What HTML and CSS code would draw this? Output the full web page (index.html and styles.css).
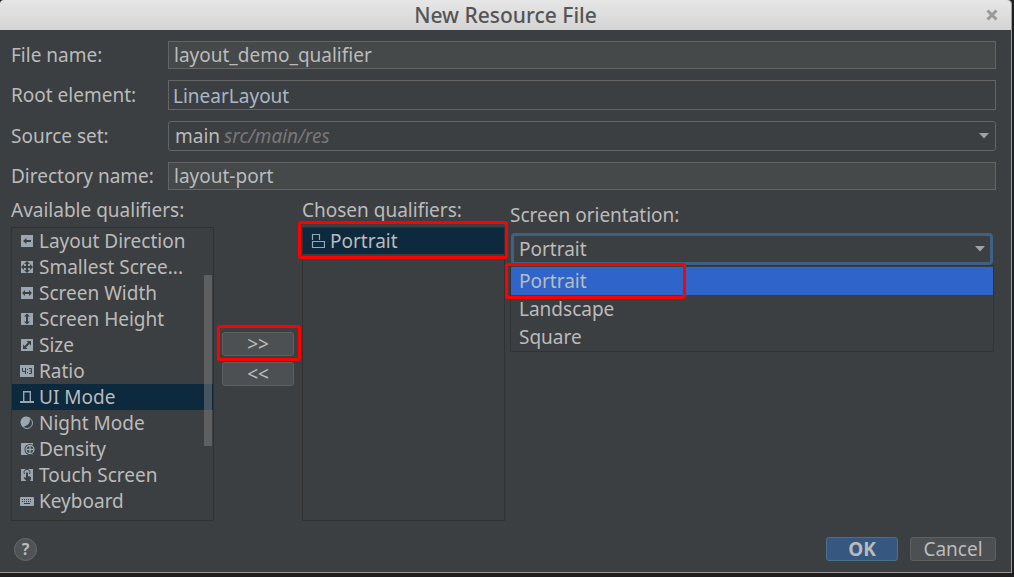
FILE: index.html
```html
<!DOCTYPE html>
<html lang="en">
<head>
<meta charset="utf-8">
<title>New Resource File</title>
<link rel="stylesheet" href="styles.css">
</head>
<body>
<main class="dialog">
  <header class="titlebar">
    <h1 class="title">New Resource File</h1>
    <button class="close" type="button" aria-label="Close">
      <svg width="12" height="12" viewBox="0 0 12 12"><path d="M1.500 1.500l9 9M10.500 1.500l-9 9" stroke="#999" stroke-width="3"/></svg>
    </button>
  </header>
  <form class="content">
    <div class="fields">
      <label for="file">File name:</label>
      <input class="field" id="file" type="text" value="layout_demo_qualifier">
      <label for="root">Root element:</label>
      <input class="field field-editor" id="root" type="text" value="LinearLayout">
      <label for="source">Source set:</label>
      <div class="combo">
        <select class="combo-select" id="source"><option>main</option></select>
        <span class="combo-hint">src/main/res</span>
        <svg class="arrow" width="10" height="6" viewBox="0 0 10 6"><path d="M0 0h10L5 5.500z" fill="#a0a3a5"/></svg>
      </div>
      <label for="directory">Directory name:</label>
      <input class="field" id="directory" type="text" value="layout-port">
    </div>

    <div class="qualifiers">
      <section class="column">
        <h2 class="heading" id="available">Available qualifiers:</h2>
        <div class="list">
          <ul class="items" role="listbox" aria-labelledby="available">
            <li class="item" role="option"><svg class="icon" viewBox="0 0 14 14"><path d="M1 1h12v12H1z" fill="#9aa7b0"/><path d="M11 7H5" stroke="#3c3f41" stroke-width="2"/><path d="M3 7l3.500-3v6z" fill="#3c3f41"/></svg>Layout Direction</li>
            <li class="item" role="option"><svg class="icon" viewBox="0 0 14 14"><path d="M1 1h12v12H1z" fill="#9aa7b0"/><path d="M7 2v10M2 7h10" stroke="#3c3f41" stroke-width="2"/><path d="M7 1l3 3H4zM7 13l3-3H4zM1 7l3-3v6zM13 7l-3-3v6z" fill="#3c3f41"/></svg>Smallest Scree...</li>
            <li class="item" role="option"><svg class="icon" viewBox="0 0 14 14"><path d="M1 1h12v12H1z" fill="#9aa7b0"/><path d="M4 7h6" stroke="#3c3f41" stroke-width="2"/><path d="M2 7l3-3v6zM12 7L9 4v6z" fill="#3c3f41"/></svg>Screen Width</li>
            <li class="item" role="option"><svg class="icon" viewBox="0 0 14 14"><path d="M1 1h12v12H1z" fill="#9aa7b0"/><path d="M7 4v6" stroke="#3c3f41" stroke-width="2"/><path d="M7 1.500l3 3H4zM7 12.500l3-3H4z" fill="#3c3f41"/></svg>Screen Height</li>
            <li class="item" role="option"><svg class="icon" viewBox="0 0 14 14"><path d="M1 1h12v12H1z" fill="#9aa7b0"/><path d="M4.500 9.500l5-5" stroke="#3c3f41" stroke-width="2"/><path d="M11 3v4.500L6.500 3zM3 11V6.500L7.500 11z" fill="#3c3f41"/></svg>Size</li>
            <li class="item" role="option"><svg class="icon" viewBox="0 0 14 14"><path d="M0 1h14v12H0z" fill="#9aa7b0"/><path d="M2.500 4v3.500h3M5.500 4v6M9 4.500h2.500v5H9M9.500 7h2" fill="none" stroke="#3c3f41"/><path d="M7 5h1v1H7zM7 8h1v1H7z" fill="#3c3f41"/></svg>Ratio</li>
            <li class="item selected" role="option" aria-selected="true"><svg class="icon" viewBox="0 0 14 14"><path d="M3.700 11V1.700h6.600V11" fill="none" stroke="#9aa7b0" stroke-width="1.400"/><path d="M0 11h14v2H0z" fill="#9aa7b0"/></svg>UI Mode</li>
            <li class="item" role="option"><svg class="icon" viewBox="0 0 14 14"><circle cx="7" cy="7" r="5.500" fill="none" stroke="#9aa7b0"/><path d="M9.500 1.500C11 5 9 10 3 11A5.500 5.500 0 1 1 9.500 1.500z" fill="#9aa7b0"/></svg>Night Mode</li>
            <li class="item" role="option"><svg class="icon icon-wide" viewBox="0 0 16 14"><path d="M1 1h12v12H1z" fill="#9aa7b0"/><circle cx="10" cy="7.500" r="5.500" fill="#3c3f41"/><circle cx="10" cy="7.500" r="4" fill="none" stroke="#9aa7b0" stroke-width="1.300"/><path d="M10 4v7M6.500 7.500h7" stroke="#9aa7b0" stroke-width="1.300"/></svg>Density</li>
            <li class="item" role="option"><svg class="icon" viewBox="0 0 14 14"><path d="M1 1h12v12H1z" fill="#9aa7b0"/><path d="M4.500 6a3 3 0 1 1 5 0" fill="none" stroke="#3c3f41"/><path d="M6 5q1-1.500 2 0v3l3 1v2l-1 2H6.500L3.500 10l1-1 1.500 1z" fill="#3c3f41"/></svg>Touch Screen</li>
            <li class="item" role="option"><svg class="icon" viewBox="0 0 14 14"><rect y="3" width="14" height="9" rx="1" fill="#9aa7b0"/><path d="M2 5.500h10M2 7.500h10" stroke="#3c3f41" stroke-dasharray="1 1"/><path d="M4 9.500h6" stroke="#3c3f41"/></svg>Keyboard</li>
          </ul>
          <div class="scroll-thumb"></div>
        </div>
      </section>

      <div class="transfer">
        <span class="marked mark-button"><button class="button" type="button" aria-label="Add qualifier">&gt;&gt;</button></span>
        <button class="button" type="button" aria-label="Remove qualifier">&lt;&lt;</button>
      </div>

      <section class="column">
        <h2 class="heading" id="chosen">Chosen qualifiers:</h2>
        <div class="list list-open">
          <ul class="items" role="listbox" aria-labelledby="chosen">
            <li class="item selected marked mark-item" role="option" aria-selected="true"><svg class="icon" viewBox="0 0 14 14"><path d="M1.500 6V.500h7V6M1.500 7.500h12v6h-12z" fill="none" stroke="#9aa7b0" stroke-width="1.200"/></svg>Portrait</li>
          </ul>
        </div>
      </section>

      <section class="editor">
        <label class="editor-label" for="orientation">Screen orientation:</label>
        <div class="combo combo-focus">
          <select class="combo-select" id="orientation"><option>Portrait</option><option>Landscape</option><option>Square</option></select>
          <svg class="arrow" width="10" height="6" viewBox="0 0 10 6"><path d="M0 0h10L5 5.500z" fill="#a0a3a5"/></svg>
          <ul class="popup" role="listbox" aria-label="Screen orientation">
            <li class="choice current" role="option" aria-selected="true"><span class="marked mark-choice">Portrait</span></li>
            <li class="choice" role="option">Landscape</li>
            <li class="choice" role="option">Square</li>
          </ul>
        </div>
      </section>
    </div>

    <footer class="actions">
      <button class="help" type="button" aria-label="Help">?</button>
      <button class="button primary" type="submit">OK</button>
      <button class="button cancel" type="button">Cancel</button>
    </footer>
  </form>
</main>
</body>
</html>
```
FILE: styles.css
```css
* { box-sizing: border-box; }
body {
  margin: 0;
  min-height: 100vh;
  padding: 0 2px 4px 0;
  display: flex;
  background: #1f1d1d;
  color: #bbbbbb;
  font: 19px/26px "Noto Sans", sans-serif;
}
h1, h2, ul { margin: 0; padding: 0; font: inherit; list-style: none; }
button, input, select { font: inherit; color: inherit; margin: 0; }
.dialog {
  flex: 1;
  display: flex;
  flex-direction: column;
  background: #3c3f41;
  border: solid #9a9a9a;
  border-width: 0 1px 1px 0;
  border-radius: 4px 4px 0 0;
}
.titlebar {
  display: grid;
  grid-template-columns: 1fr auto 1fr;
  align-items: center;
  height: 30px;
  padding: 0 13px;
  background: linear-gradient(#e6e6e6, #d4d4d4);
  border-radius: 4px 4px 0 0;
}
.title { grid-column: 2; color: #555; font-size: 21px; font-weight: 500; }
.close { justify-self: end; display: flex; padding: 0; border: 0; background: none; }
.content { flex: 1; display: flex; flex-direction: column; padding: 11px 15px 11px 11px; }
.fields {
  display: grid;
  grid-template-columns: 157px 1fr;
  row-gap: 11px;
  align-items: center;
}
.field {
  width: 100%;
  height: 28px;
  padding: 0 5px;
  background: #45494a;
  border: 1px solid #646464;
  border-radius: 0;
}
.field-editor { height: 30px; padding: 2px 4px 0; background: #3c3f41; color: #a9b7c6; }
.combo {
  position: relative;
  display: grid;
  grid-template-columns: auto 1fr auto;
  align-items: center;
  height: 30px;
  border: 1px solid #646464;
  border-radius: 3px;
}
.combo-select {
  grid-area: 1 / 1 / 2 / 4;
  width: 100%;
  height: 28px;
  padding: 0 6px;
  appearance: none;
  background: none;
  border: 0;
  outline: 0;
}
.combo-hint { grid-area: 1 / 1; padding-left: 55px; color: #787878; font-style: italic; pointer-events: none; }
.arrow { grid-area: 1 / 3; margin-right: 6px; pointer-events: none; }
.qualifiers { flex: 1; display: flex; padding-top: 7px; }
.column { width: 203px; display: flex; flex-direction: column; }
.heading { height: 30px; line-height: 26px; white-space: nowrap; }
.list { position: relative; height: 294px; border: 1px solid #313131; overflow: hidden; }
.list-open { overflow: visible; }
.item { display: flex; align-items: center; gap: 5px; height: 26px; padding-left: 8px; white-space: nowrap; }
.selected { background: #0d293e; }
.icon { width: 14px; height: 14px; flex: none; }
.icon-wide { width: 16px; margin-right: -2px; }
.scroll-thumb { position: absolute; top: 47px; right: 1px; width: 8px; height: 171px; background: rgba(128, 128, 128, .5); }
.transfer { width: 88px; padding: 135px 8px 0; display: flex; flex-direction: column; gap: 6px; }
.marked { position: relative; }
.marked::after { content: ""; position: absolute; z-index: 2; border: 3px solid #fe0000; border-radius: 3px; pointer-events: none; }
.mark-button { display: flex; }
.mark-button::after { inset: -7px -7px -5px -5px; }
.mark-item::after { inset: -7px -4px -5px -5px; }
.mark-choice::after { inset: -4px -99px -4px -14px; }
.button {
  width: 72px;
  height: 24px;
  padding: 0;
  line-height: 22px;
  background: #4c5052;
  border: 1px solid #5e6060;
  border-radius: 3px;
}
.primary { background: #365880; border-color: #4c708c; font-weight: 700; }
.cancel { width: 86px; }
.editor { flex: 1; padding: 5px 2px 0 5px; }
.editor-label { display: block; height: 31px; line-height: 26px; }
.combo-focus { height: 32px; margin: 0 1px; border: 3px solid #3d6185; border-radius: 4px; }
.combo-focus .combo-select { height: 26px; padding: 0 5px; }
.combo-focus .arrow { margin-right: 5px; }
.popup {
  position: absolute;
  z-index: 1;
  top: 29px;
  left: -4px;
  right: -4px;
  padding-top: 1px;
  background: #3c3f41;
  border: 1px solid #313335;
}
.choice { height: 28px; padding-left: 8px; line-height: 28px; }
.choice .marked { display: inline-block; }
.current { background: #2f65ca; }
.actions { display: flex; align-items: center; gap: 12px; padding-top: 16px; }
.help {
  width: 23px;
  height: 23px;
  margin: 0 auto 0 3px;
  padding: 0;
  border: 1px solid #686b6d;
  border-radius: 50%;
  background: #4f5355;
  font-size: 16px;
  font-weight: 700;
  line-height: 20px;
}
```
